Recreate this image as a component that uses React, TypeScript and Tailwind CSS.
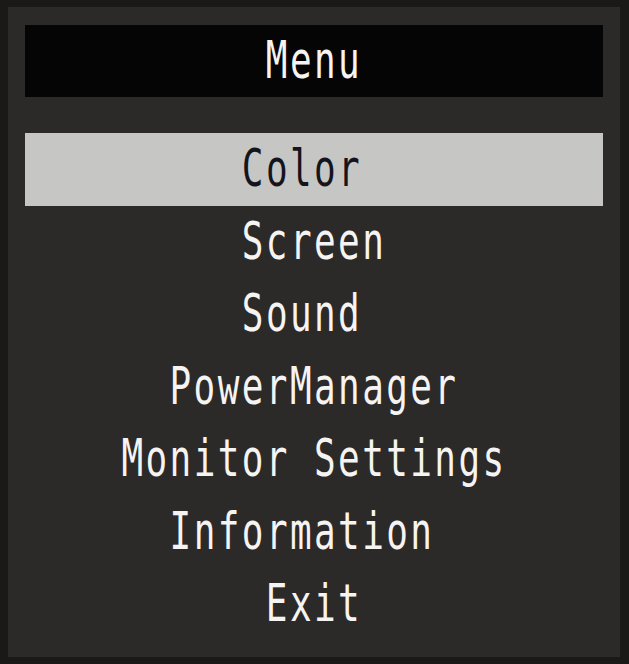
const items = ["Screen", "Sound", "PowerManager", "Monitor Settings", "Information", "Exit"];

// the OSD centres text on a two-cell grid, so odd-length labels sit half a cell left
function Label({ text, dark }: { text: string; dark?: boolean }) {
  const odd = text.length % 2 === 1;
  return (
    <span
      className={`inline-block scale-y-[1.42] whitespace-pre text-[36px] tracking-[2.4px] leading-none font-['DejaVu_Sans_Mono',monospace] ${
        dark ? "text-[#14141c]" : "text-[#f6f4f2]"
      } ${odd ? "mr-[24px]" : ""}`}
    >
      {text}
    </span>
  );
}

export default function App() {
  return (
    <div className="w-[629px] h-[664px] bg-[#1a1918] pt-[7px] pb-[7px] pl-[8px] pr-[9px]">
      <div className="h-full bg-[#2b2a29] px-[17px] pt-[18px] flex flex-col">
        <div className="h-[72px] bg-[#050505] flex items-center justify-center">
          <Label text="Menu" />
        </div>
        <div className="mt-[36px] h-[72.5px] bg-[#c6c6c4] flex items-center justify-center">
          <Label text="Color" dark />
        </div>
        {items.map((it) => (
          <div key={it} className="h-[72.5px] flex items-center justify-center">
            <Label text={it} />
          </div>
        ))}
      </div>
    </div>
  );
}
